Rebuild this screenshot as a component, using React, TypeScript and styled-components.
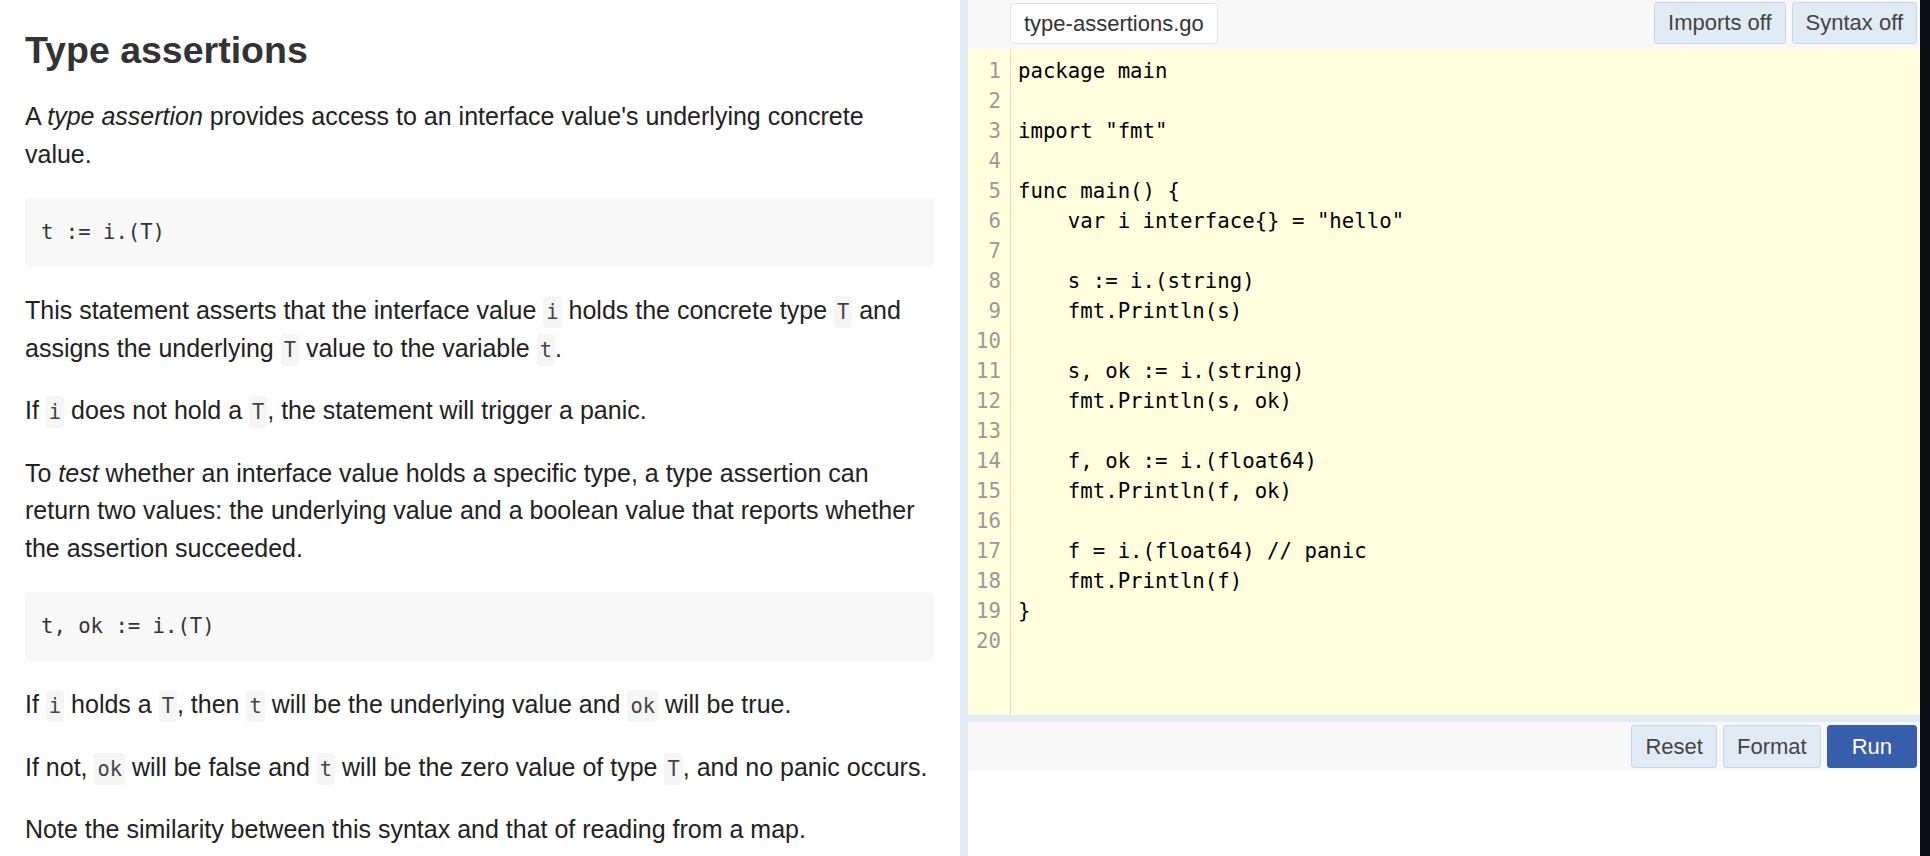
import React from "react";
import styled, { createGlobalStyle } from "styled-components";

const GlobalStyle = createGlobalStyle`
  html, body {
    margin: 0;
    padding: 0;
    background: #fff;
    overflow: hidden;
  }
  #root {
    height: 856px;
  }
`;

const SANS = `"Liberation Sans", Arial, sans-serif`;
const MONO = `"DejaVu Sans Mono", "Liberation Mono", monospace`;

const Page = styled.div`
  display: flex;
  width: 1930px;
  height: 856px;
`;

const Lesson = styled.article`
  width: 960px;
  flex-shrink: 0;
  box-sizing: border-box;
  padding: 28px 26px 0 25px;
  font-family: ${SANS};
  font-size: 25px;
  line-height: 1.5;
  color: #222;
  overflow: hidden;
`;

const Title = styled.h1`
  margin: 0 0 24px;
  font-size: 37.5px;
  line-height: 1.2;
  font-weight: bold;
  color: #333;
`;

const Para = styled.p`
  margin: 25px 0;
`;

const CodeBlock = styled.pre`
  margin: 25px 0;
  padding: 22px 16px;
  background: #f8f8f8;
  border-radius: 5px;
  font-family: ${MONO};
  font-size: 20.6px;
  line-height: 25px;
  color: #333;
`;

const Code = styled.code`
  font-family: ${MONO};
  font-size: 20.4px;
  padding: 4px 3px;
  border-radius: 4px;
  background: #f5f5f5;
  color: #444;
`;

const Divider = styled.div`
  width: 8px;
  flex-shrink: 0;
  background: #e0ebf5;
`;

const Playground = styled.section`
  flex: 1;
  display: flex;
  flex-direction: column;
  background: #fff;
`;

const Header = styled.div`
  height: 49px;
  box-sizing: border-box;
  display: flex;
  align-items: flex-start;
  gap: 6px;
  padding: 2px 3px 0 42px;
  background: #f8f8f8;
`;

const FileTab = styled.div`
  margin-top: 1px;
  height: 41px;
  box-sizing: border-box;
  display: flex;
  align-items: center;
  padding: 0 13px;
  background: #fff;
  border: 1px solid #e2e2e2;
  border-radius: 4px;
  font-family: ${SANS};
  font-size: 22px;
  color: #333;
`;

const Spacer = styled.div`
  flex: 1;
`;

const Button = styled.button<{ $primary?: boolean; $tall?: boolean }>`
  height: ${({ $tall }) => ($tall ? 43 : 42)}px;
  box-sizing: border-box;
  padding: 0 ${({ $primary }) => ($primary ? 24 : 13)}px;
  border: 1px solid ${({ $primary }) => ($primary ? "#375eab" : "#c9d6e3")};
  border-radius: 3px;
  background: ${({ $primary }) => ($primary ? "#375eab" : "#e0ebf5")};
  color: ${({ $primary }) => ($primary ? "#fff" : "#444")};
  font-family: ${SANS};
  font-size: 22px;
  cursor: pointer;
`;

const Editor = styled.div`
  height: 666px;
  display: flex;
  background: #ffffdd;
  font-family: ${MONO};
  font-size: 20.7px;
  line-height: 30px;
`;

const Gutter = styled.div`
  width: 43px;
  box-sizing: border-box;
  padding: 7px 9px 0 0;
  border-right: 1px solid #ddd;
  text-align: right;
  color: #999;
`;

const Source = styled.pre`
  margin: 0;
  padding: 7px 0 0 7px;
  font: inherit;
  color: #000;
  white-space: pre;
`;

const Separator = styled.div`
  height: 7px;
  background: #e0ebf5;
`;

const Toolbar = styled.div`
  height: 49px;
  box-sizing: border-box;
  display: flex;
  justify-content: flex-end;
  align-items: flex-start;
  gap: 6px;
  padding: 3px 3px 0;
  background: #f8f8f8;
`;

const Output = styled.div`
  flex: 1;
  background: #fff;
`;

const Edge = styled.div`
  width: 10px;
  flex-shrink: 0;
  background: #0b0e17;
`;

const source = `package main

import "fmt"

func main() {
    var i interface{} = "hello"

    s := i.(string)
    fmt.Println(s)

    s, ok := i.(string)
    fmt.Println(s, ok)

    f, ok := i.(float64)
    fmt.Println(f, ok)

    f = i.(float64) // panic
    fmt.Println(f)
}
`;

const lineCount = 20;

export default function App() {
  return (
    <>
      <GlobalStyle />
      <Page>
        <Lesson>
          <Title>Type assertions</Title>
          <Para>
            A <em>type assertion</em> provides access to an interface value's
            underlying concrete value.
          </Para>
          <CodeBlock>t := i.(T)</CodeBlock>
          <Para>
            This statement asserts that the interface value <Code>i</Code> holds
            the concrete type <Code>T</Code> and assigns the underlying{" "}
            <Code>T</Code> value to the variable <Code>t</Code>.
          </Para>
          <Para>
            If <Code>i</Code> does not hold a <Code>T</Code>, the statement will
            trigger a panic.
          </Para>
          <Para>
            To <em>test</em> whether an interface value holds a specific type, a
            type assertion can return two values: the underlying value and a
            boolean value that reports whether the assertion succeeded.
          </Para>
          <CodeBlock>t, ok := i.(T)</CodeBlock>
          <Para>
            If <Code>i</Code> holds a <Code>T</Code>, then <Code>t</Code> will be
            the underlying value and <Code>ok</Code> will be true.
          </Para>
          <Para>
            If not, <Code>ok</Code> will be false and <Code>t</Code> will be the
            zero value of type <Code>T</Code>, and no panic occurs.
          </Para>
          <Para>
            Note the similarity between this syntax and that of reading from a
            map.
          </Para>
        </Lesson>
        <Divider />
        <Playground>
          <Header>
            <FileTab>type-assertions.go</FileTab>
            <Spacer />
            <Button>Imports off</Button>
            <Button>Syntax off</Button>
          </Header>
          <Editor>
            <Gutter>
              {Array.from({ length: lineCount }, (_, i) => (
                <div key={i}>{i + 1}</div>
              ))}
            </Gutter>
            <Source>{source}</Source>
          </Editor>
          <Separator />
          <Toolbar>
            <Button $tall>Reset</Button>
            <Button $tall>Format</Button>
            <Button $tall $primary>
              Run
            </Button>
          </Toolbar>
          <Output />
        </Playground>
        <Edge />
      </Page>
    </>
  );
}
